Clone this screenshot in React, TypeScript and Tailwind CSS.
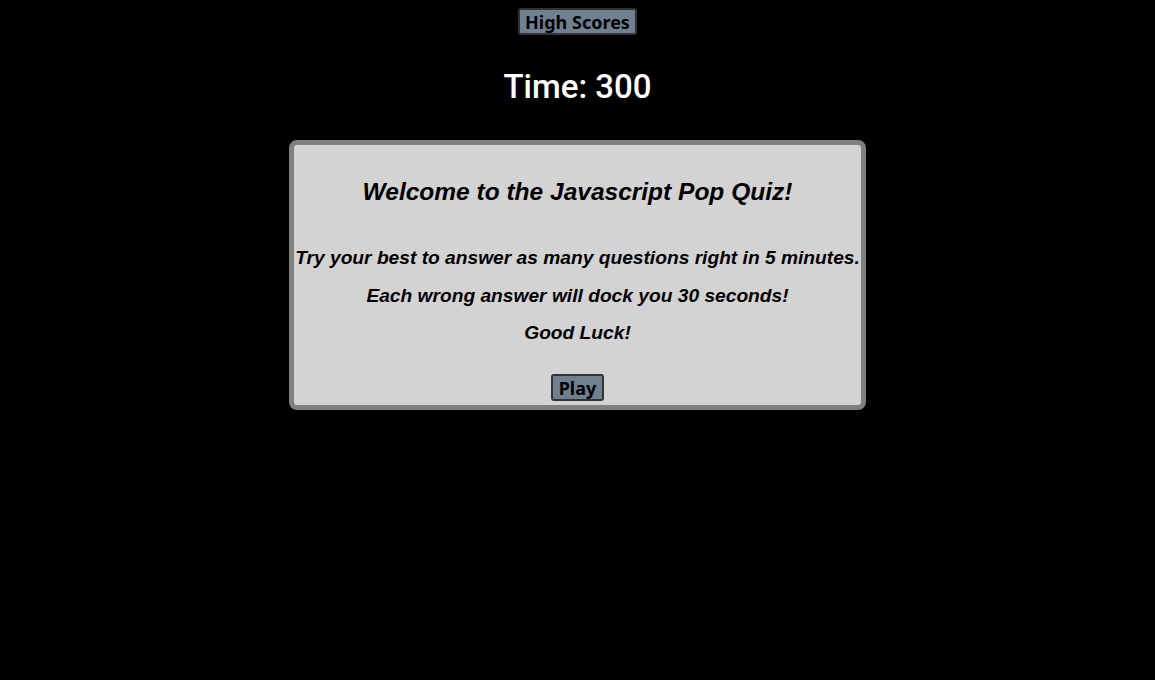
export default function App() {
  return (
    <div className="min-h-[680px] w-full bg-black flex flex-col items-center">
      <button className="mt-2 h-[27px] px-[5px] bg-[#708090] border-2 border-[#333333] rounded-[3px] text-[18px] leading-none font-bold text-black font-['Noto_Sans',sans-serif]">
        High Scores
      </button>
      <h1 className="mt-[29px] h-[44px] flex items-center text-[33px] leading-none font-medium text-white font-['Roboto',sans-serif]">
        Time: 300
      </h1>
      <div className="mt-[32px] w-1/2 h-[270px] border-[5px] border-[#808080] rounded-[8px] bg-[#d3d3d3] flex flex-col items-center text-black italic font-bold font-['Liberation_Sans',sans-serif]">
        <h2 className="mt-[32px] h-[30px] flex items-center text-[24.5px] leading-none">
          Welcome to the Javascript Pop Quiz!
        </h2>
        <p className="mt-[39px] h-[24px] flex items-center text-[19.2px] leading-none">
          Try your best to answer as many questions right in 5 minutes.
        </p>
        <p className="mt-[14px] h-[24px] flex items-center text-[19.2px] leading-none">
          Each wrong answer will dock you 30 seconds!
        </p>
        <p className="mt-[13px] h-[24px] flex items-center text-[19.2px] leading-none">
          Good Luck!
        </p>
        <button className="mt-[29px] h-[27px] px-[6px] bg-[#708090] border-2 border-[#333333] rounded-[3px] text-[18px] leading-none font-bold not-italic text-black font-['Noto_Sans',sans-serif]">
          Play
        </button>
      </div>
    </div>
  );
}
